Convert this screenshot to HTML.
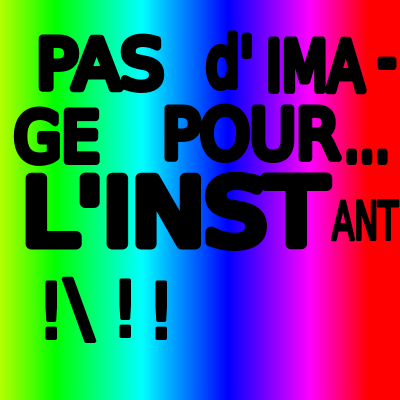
<!DOCTYPE html>
<html><head><style>
html,body{margin:0;padding:0}
body{width:400px;height:400px;overflow:hidden;background:linear-gradient(90deg,#b4ff00 0px,#00ff00 55px,#00ffff 142px,#0000ff 228px,#ff00ff 310px,#ff0000 368px,#ff0000 400px)}
svg{position:absolute;left:0;top:0}
text{font-family:"DejaVu Sans","Liberation Sans",sans-serif;font-weight:normal;fill:#000;stroke:#000;stroke-linejoin:round;stroke-linecap:round}
</style></head><body>
<svg width="400" height="400" viewBox="0 0 400 400">
<g font-size="68" stroke-width="8">
<text x="36" y="88" textLength="128" lengthAdjust="spacingAndGlyphs">PAS</text>
<text x="206" y="86" textLength="48" lengthAdjust="spacingAndGlyphs">d'</text>
<text x="266" y="90" textLength="98" lengthAdjust="spacingAndGlyphs">IMA</text>
<text x="378" y="82" textLength="18" lengthAdjust="spacingAndGlyphs">-</text>
<text x="14" y="161" textLength="86" lengthAdjust="spacingAndGlyphs">GE</text>
<text x="162" y="158" textLength="178" lengthAdjust="spacingAndGlyphs">POUR</text>
<text x="344" y="161" textLength="46" lengthAdjust="spacingAndGlyphs">...</text>
</g>
<text x="22" y="244" font-size="90" stroke-width="11" textLength="304" lengthAdjust="spacingAndGlyphs">L'INST</text>
<text x="332" y="239" font-size="52" stroke-width="4" textLength="66" lengthAdjust="spacingAndGlyphs">ANT</text>
<g font-size="76" stroke-width="4">
<text x="36" y="338">!</text>
<text x="64" y="334" textLength="30" lengthAdjust="spacingAndGlyphs">\</text>
<text x="110" y="336">!</text>
<text x="146" y="338">!</text>
</g>
</svg>
</body></html>
